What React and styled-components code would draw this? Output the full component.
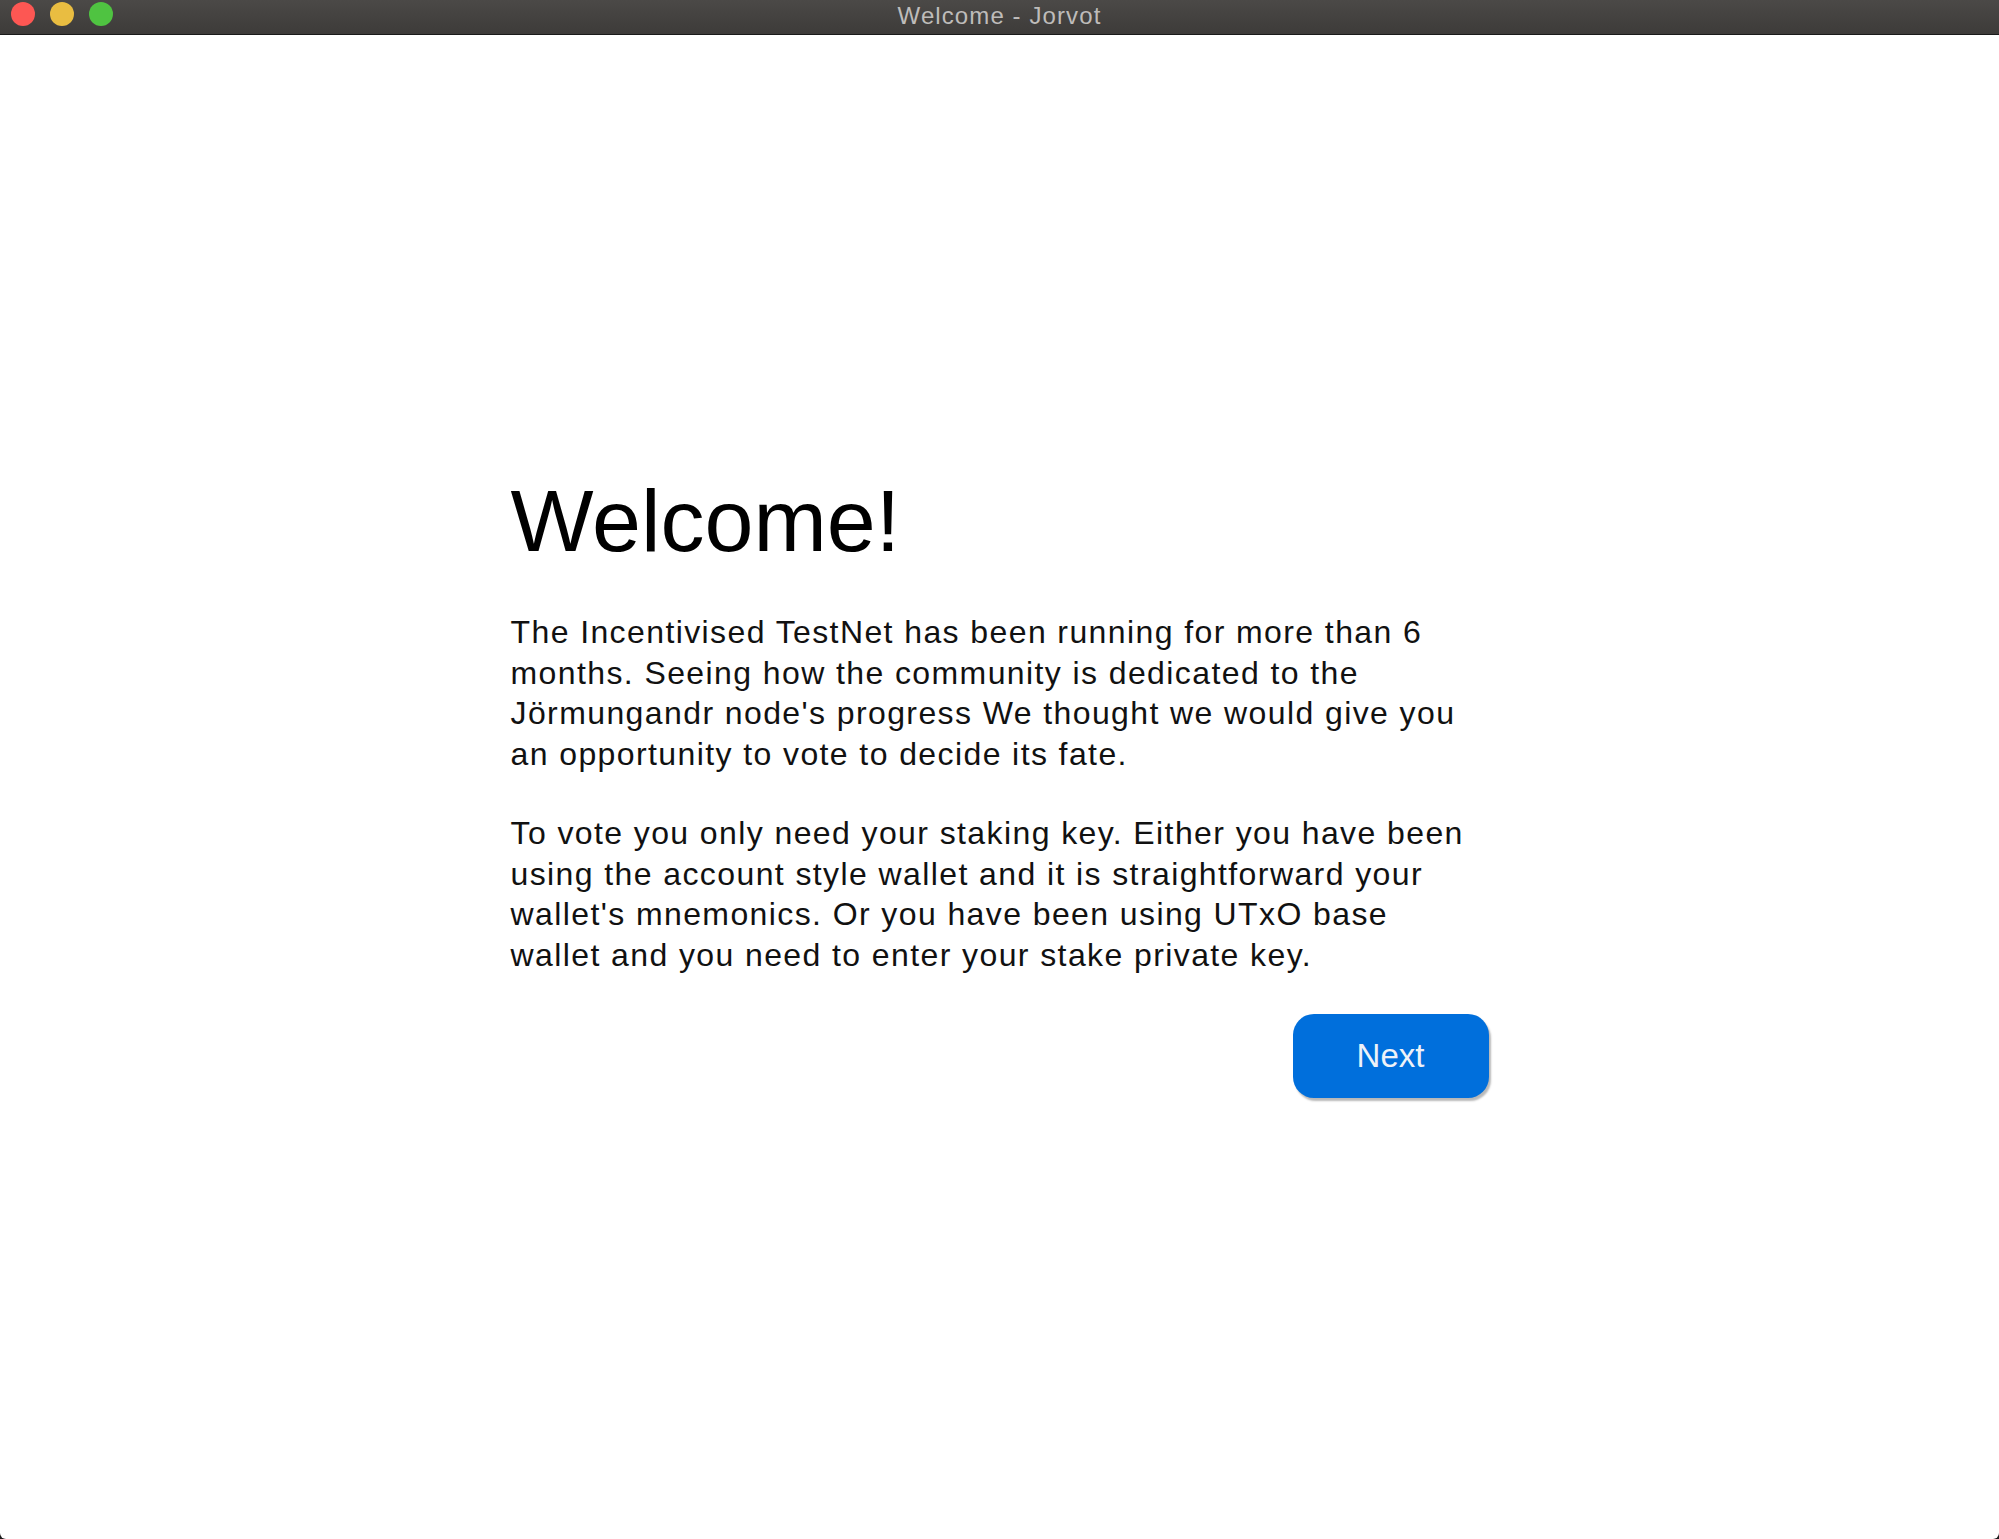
import React from "react";
import styled, { createGlobalStyle } from "styled-components";

const GlobalStyle = createGlobalStyle`
	html, body {
		margin: 0;
		padding: 0;
		background: #1c1c1c;
	}
	#root {
		height: 1539px;
	}
`;

const Window = styled.div`
	height: 1539px;
	display: flex;
	flex-direction: column;
	background-color: #ffffff;
	border-radius: 0 0 6px 6px;
	overflow: hidden;
	font-family: "Liberation Sans", Arial, sans-serif;
`;

const TitleBar = styled.div`
	position: relative;
	height: 34px;
	flex: 0 0 34px;
	display: flex;
	align-items: center;
	justify-content: center;
	background: linear-gradient(#4b4947, #3d3b39);
	border-bottom: 1px solid #1a1a1a;
	.title {
		color: #bebcba;
		font-size: 24px;
		letter-spacing: 1.1px;
		line-height: 1;
		margin-top: -3px;
	}
`;

const Lights = styled.div`
	position: absolute;
	left: 11px;
	top: 2px;
	display: flex;
	gap: 15px;
`;

const Light = styled.span`
	width: 24px;
	height: 24px;
	border-radius: 50%;
	background-color: ${({ color }) => color};
`;

const Content = styled.main`
	flex: 1;
	display: flex;
	justify-content: center;
	padding-top: 435px;
`;

const Panel = styled.section`
	width: 978px;
	display: flex;
	flex-direction: column;
	color: #111;
`;

const Heading = styled.h1`
	margin: 0 0 41px;
	font-size: 88px;
	font-weight: 400;
	line-height: 101px;
	color: #000;
`;

const Text = styled.p`
	max-width: 965px;
	margin: 0 0 39px;
	font-size: 32px;
	letter-spacing: 1.4px;
	line-height: 40.5px;
`;

const Actions = styled.div`
	display: flex;
	justify-content: flex-end;
`;

const NextButton = styled.button`
	width: 196px;
	height: 84px;
	border: none;
	border-radius: 21px;
	background-color: #006fdc;
	color: #eef2f8;
	font-family: "Liberation Sans", Arial, sans-serif;
	font-size: 33px;
	box-shadow: 2px 3px 2px rgba(0, 0, 0, 0.28);
	cursor: pointer;
`;

const App = () => {
	return (
		<>
			<GlobalStyle />
			<Window>
				<TitleBar>
					<Lights>
						<Light color="#fd5753" />
						<Light color="#e9bd41" />
						<Light color="#4fc341" />
					</Lights>
					<span className="title">Welcome - Jorvot</span>
				</TitleBar>
				<Content>
					<Panel>
						<Heading>Welcome!</Heading>
						<Text>
							The Incentivised TestNet has been running for more than 6
							months. Seeing how the community is dedicated to the
							Jörmungandr node's progress We thought we would give you an
							opportunity to vote to decide its fate.
						</Text>
						<Text>
							To vote you only need your staking key. Either you have been
							using the account style wallet and it is straightforward
							your wallet's mnemonics. Or you have been using UTxO base
							wallet and you need to enter your stake private key.
						</Text>
						<Actions>
							<NextButton>Next</NextButton>
						</Actions>
					</Panel>
				</Content>
			</Window>
		</>
	);
};

export default App;
